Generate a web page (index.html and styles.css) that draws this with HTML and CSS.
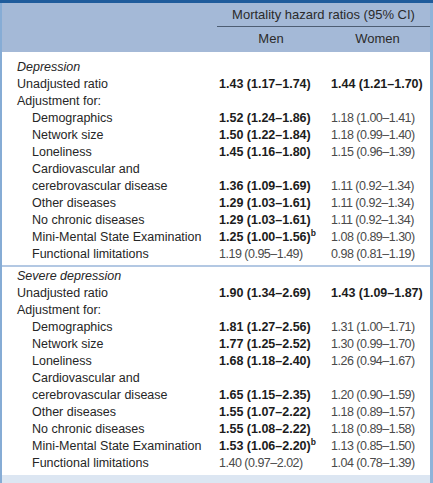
FILE: index.html
```html
<!DOCTYPE html>
<html lang="en">
<head>
<meta charset="utf-8">
<title>Mortality hazard ratios</title>
<link rel="stylesheet" href="styles.css">
</head>
<body>
<div class="page">
  <div class="topbar"></div>
  <div class="frame">
    <div class="head">
      <div class="head-row1">
        <div></div>
        <div class="span-head">Mortality hazard ratios (95% CI)</div>
      </div>
      <div class="head-row2">
        <div></div>
        <div class="col-head">Men</div>
        <div class="col-head">Women</div>
      </div>
    </div>

    <div class="block first">
      <div class="row"><div class="lab section">Depression</div><div></div><div></div></div>
      <div class="row"><div class="lab">Unadjusted ratio</div><div class="val men b">1.43 (1.17–1.74)</div><div class="val women b">1.44 (1.21–1.70)</div></div>
      <div class="row"><div class="lab">Adjustment for:</div><div></div><div></div></div>
      <div class="row"><div class="lab ind">Demographics</div><div class="val men b">1.52 (1.24–1.86)</div><div class="val women">1.18 (1.00–1.41)</div></div>
      <div class="row"><div class="lab ind">Network size</div><div class="val men b">1.50 (1.22–1.84)</div><div class="val women">1.18 (0.99–1.40)</div></div>
      <div class="row"><div class="lab ind">Loneliness</div><div class="val men b">1.45 (1.16–1.80)</div><div class="val women">1.15 (0.96–1.39)</div></div>
      <div class="row"><div class="lab ind">Cardiovascular and</div><div></div><div></div></div>
      <div class="row"><div class="lab ind">cerebrovascular disease</div><div class="val men b">1.36 (1.09–1.69)</div><div class="val women">1.11 (0.92–1.34)</div></div>
      <div class="row"><div class="lab ind">Other diseases</div><div class="val men b">1.29 (1.03–1.61)</div><div class="val women">1.11 (0.92–1.34)</div></div>
      <div class="row"><div class="lab ind">No chronic diseases</div><div class="val men b">1.29 (1.03–1.61)</div><div class="val women">1.11 (0.92–1.34)</div></div>
      <div class="row"><div class="lab ind">Mini-Mental State Examination</div><div class="val men b">1.25 (1.00–1.56)<sup class="note">b</sup></div><div class="val women">1.08 (0.89–1.30)</div></div>
      <div class="row"><div class="lab ind">Functional limitations</div><div class="val men">1.19 (0.95–1.49)</div><div class="val women">0.98 (0.81–1.19)</div></div>
    </div>

    <div class="sep"></div>

    <div class="block second">
      <div class="row"><div class="lab section">Severe depression</div><div></div><div></div></div>
      <div class="row"><div class="lab">Unadjusted ratio</div><div class="val men b">1.90 (1.34–2.69)</div><div class="val women b">1.43 (1.09–1.87)</div></div>
      <div class="row"><div class="lab">Adjustment for:</div><div></div><div></div></div>
      <div class="row"><div class="lab ind">Demographics</div><div class="val men b">1.81 (1.27–2.56)</div><div class="val women">1.31 (1.00–1.71)</div></div>
      <div class="row"><div class="lab ind">Network size</div><div class="val men b">1.77 (1.25–2.52)</div><div class="val women">1.30 (0.99–1.70)</div></div>
      <div class="row"><div class="lab ind">Loneliness</div><div class="val men b">1.68 (1.18–2.40)</div><div class="val women">1.26 (0.94–1.67)</div></div>
      <div class="row"><div class="lab ind">Cardiovascular and</div><div></div><div></div></div>
      <div class="row"><div class="lab ind">cerebrovascular disease</div><div class="val men b">1.65 (1.15–2.35)</div><div class="val women">1.20 (0.90–1.59)</div></div>
      <div class="row"><div class="lab ind">Other diseases</div><div class="val men b">1.55 (1.07–2.22)</div><div class="val women">1.18 (0.89–1.57)</div></div>
      <div class="row"><div class="lab ind">No chronic diseases</div><div class="val men b">1.55 (1.08–2.22)</div><div class="val women">1.18 (0.89–1.58)</div></div>
      <div class="row"><div class="lab ind">Mini-Mental State Examination</div><div class="val men b">1.53 (1.06–2.20)<sup class="note">b</sup></div><div class="val women">1.13 (0.85–1.50)</div></div>
      <div class="row"><div class="lab ind">Functional limitations</div><div class="val men">1.40 (0.97–2.02)</div><div class="val women">1.04 (0.78–1.39)</div></div>
    </div>

    <div class="footband"></div>
  </div>
</div>
</body>
</html>
```

FILE: styles.css
```css
html, body {
  margin: 0;
  padding: 0;
  background: #ffffff;
}

.page {
  width: 433px;
  height: 483px;
  overflow: hidden;
  font-family: "Liberation Sans", Arial, sans-serif;
  font-size: 12.5px;
  color: #262626;
}

.topbar {
  height: 3px;
  background: #1f5c9c;
}

.frame {
  display: flex;
  flex-direction: column;
  border-left: 2px solid #86acd5;
  border-right: 3px solid #8fb3d9;
  height: 480px;
}

.head {
  background: #a4b9d7;
  font-size: 13px;
}

.head-row1 {
  display: grid;
  grid-template-columns: 215px 1fr;
  height: 24px;
}

.span-head {
  border-bottom: 1px solid #4d5d73;
  text-align: center;
  line-height: 23px;
  color: #2b2b2b;
}

.head-row2 {
  display: grid;
  grid-template-columns: 215px 108px 1fr;
  height: 25px;
}

.col-head {
  text-align: center;
  line-height: 24px;
  color: #2b2b2b;
}

.block.first {
  padding-top: 7px;
  padding-bottom: 2px;
}

.block.second {
  padding-top: 1px;
  padding-bottom: 3px;
}

.row {
  display: grid;
  grid-template-columns: 215px 110px 1fr;
  height: 17px;
  line-height: 17px;
  white-space: nowrap;
}

.lab {
  padding-left: 15px;
}

.lab.ind {
  padding-left: 30px;
}

.lab.section {
  font-style: italic;
}

.val {
  color: #4a4a4a;
  letter-spacing: -0.5px;
}

.val.men {
  padding-left: 2px;
}

.val.women {
  padding-left: 4px;
}

.val.b {
  font-weight: 700;
  color: #1c1c1c;
  letter-spacing: 0;
}

.note {
  font-size: 8.5px;
  line-height: 0;
  vertical-align: 5px;
}

.sep {
  height: 2px;
  background: #b3c8e3;
}

.footband {
  height: 8px;
  background: #dce6f2;
}
```
